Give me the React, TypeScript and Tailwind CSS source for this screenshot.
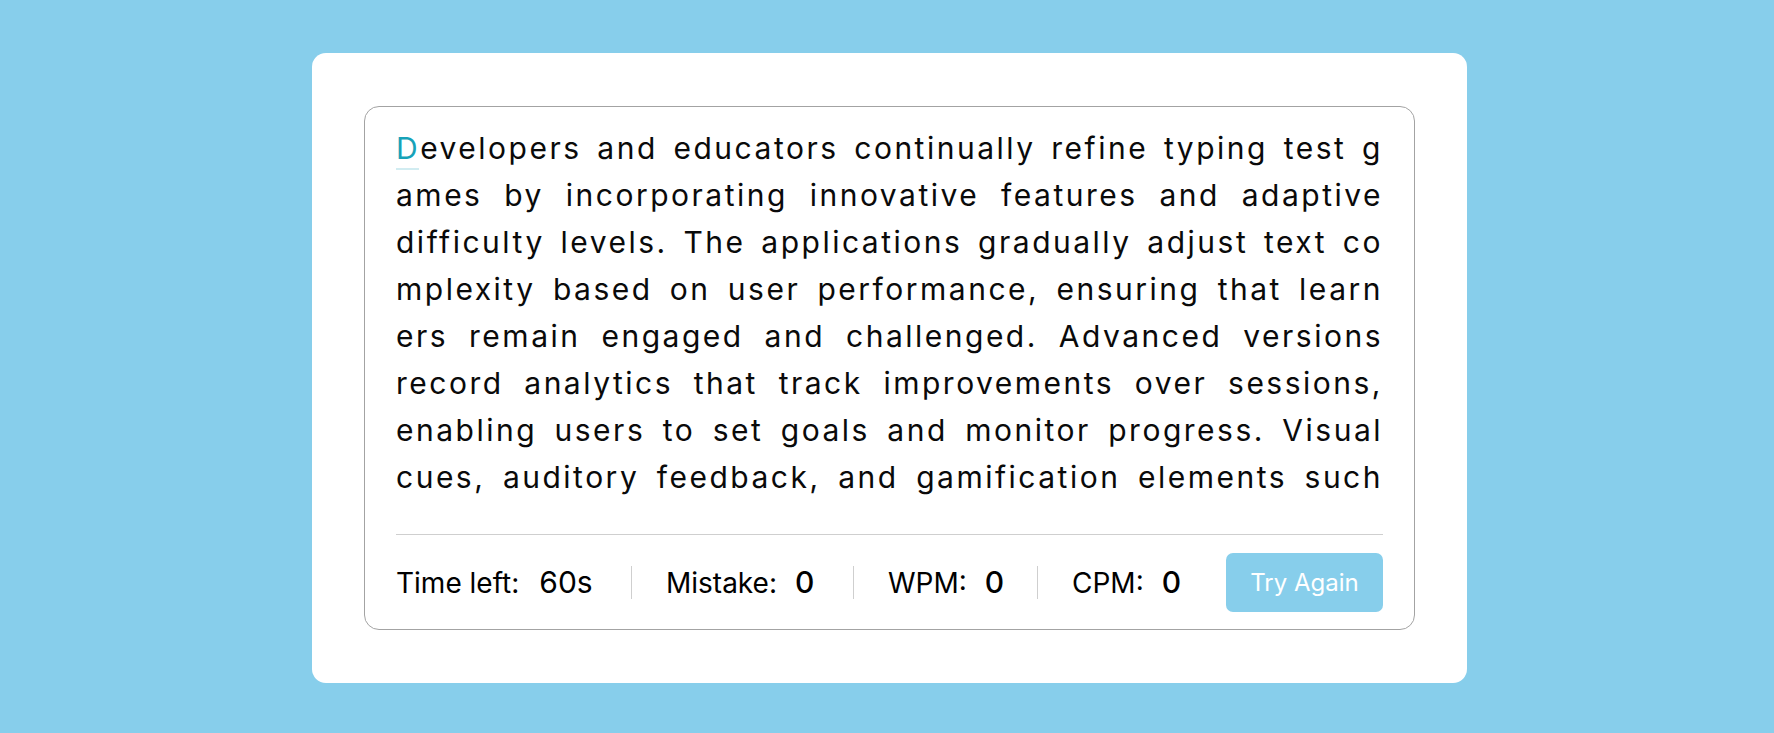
import React from "react";

const lines = [
  "evelopers and educators continually refine typing test g",
  "ames by incorporating innovative features and adaptive",
  "difficulty levels. The applications gradually adjust text co",
  "mplexity based on user performance, ensuring that learn",
  "ers remain engaged and challenged. Advanced versions",
  "record analytics that track improvements over sessions,",
  "enabling users to set goals and monitor progress. Visual",
  "cues, auditory feedback, and gamification elements such",
];

export default function App() {
  return (
    <div
      className="min-h-screen bg-[#87CEEB] flex justify-center items-start pt-[53px] pl-[5px]"
      style={{ fontFamily: "Inter, 'Noto Sans', sans-serif" }}
    >
      <div className="w-[1155px] bg-white rounded-[14px] px-[52px] py-[53px]">
        <div className="border border-[#a3a3a3] rounded-[15px] pt-[18px] px-[31px]">
          <div className="text-[30px] leading-[47px] tracking-[2.5px] text-[#0a0a0a]">
            {lines.map((l, i) => (
              <div key={i} className="text-justify [text-align-last:justify]">
                {i === 0 && (
                  <span className="relative text-[#17A2B8]">
                    D
                    <span className="absolute left-0 right-[1px] top-[38px] h-[2px] bg-[#17A2B8]/20" />
                  </span>
                )}
                {l}
              </div>
            ))}
          </div>
          <div className="mt-[33px] border-t border-[#cfcfcf] pt-[18px] pb-[17px] flex items-center justify-between">
            <ul className="flex items-center text-black">
              <li className="w-[235px] h-[33px] flex items-center">
                <span className="text-[28px]">Time left:</span>
                <span className="text-[30px] ml-[20px]">60s</span>
              </li>
              <li className="w-[222px] h-[33px] flex items-center border-l border-[#cfcfcf] pl-[34px]">
                <span className="text-[28px]">Mistake:</span>
                <span className="text-[30px] font-medium ml-[18px]">0</span>
              </li>
              <li className="w-[184px] h-[33px] flex items-center border-l border-[#cfcfcf] pl-[34px]">
                <span className="text-[28px]">WPM:</span>
                <span className="text-[30px] font-medium ml-[18px]">0</span>
              </li>
              <li className="h-[33px] flex items-center border-l border-[#cfcfcf] pl-[34px]">
                <span className="text-[28px]">CPM:</span>
                <span className="text-[30px] font-medium ml-[18px]">0</span>
              </li>
            </ul>
            <button className="w-[157px] h-[59px] rounded-[7px] bg-[#87CEEB] text-white text-[24px]">
              Try Again
            </button>
          </div>
        </div>
      </div>
    </div>
  );
}
